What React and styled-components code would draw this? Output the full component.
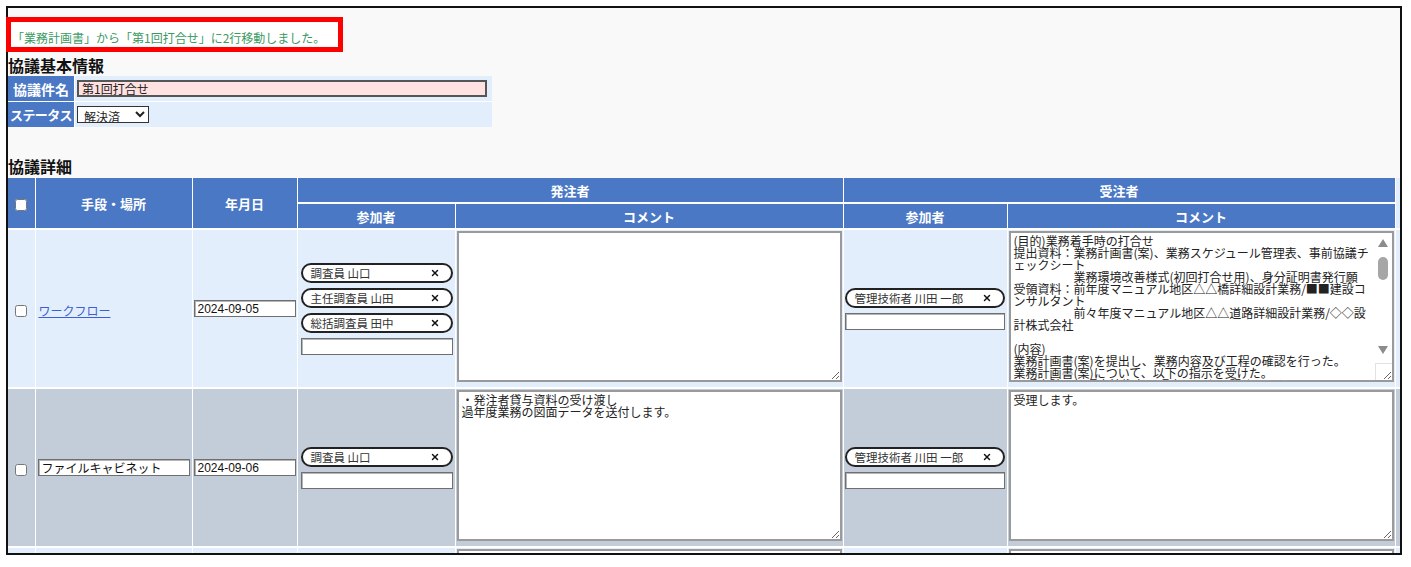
import React from "react";
import styled, { createGlobalStyle } from "styled-components";
import { X } from "lucide-react";

const jp = `"Noto Sans CJK JP", "Liberation Sans", sans-serif`;

const GlobalStyle = createGlobalStyle`
  html, body {
    margin: 0;
    padding: 0;
    background: #fff;
  }
  body {
    font-family: ${jp};
  }
`;

const Page = styled.div`
  position: relative;
  width: 1411px;
  height: 567px;
  padding-top: 6px;
  padding-left: 6px;
  box-sizing: border-box;
`;

const Frame = styled.div`
  width: 1396px;
  height: 549px;
  box-sizing: border-box;
  border: 2px solid #111;
  background: #f9f9f9;
  overflow: hidden;
`;

const RedMark = styled.div`
  position: absolute;
  left: 6px;
  top: 17px;
  width: 337px;
  height: 35px;
  box-sizing: border-box;
  border: 5px solid #ff0000;
  pointer-events: none;
`;

const Message = styled.div`
  width: 327px;
  height: 23px;
  margin: 15px 0 0 3px;
  padding: 8px 0 0 1px;
  box-sizing: border-box;
  background: #fff;
  color: #3a9a62;
  font-size: 12px;
  line-height: 14px;
  white-space: nowrap;
`;

const Heading = styled.h2`
  margin: ${(p) => p.$top}px 0 0;
  font-size: 16px;
  font-weight: bold;
  line-height: ${(p) => p.$lh}px;
  color: #111;
`;

const InfoTable = styled.table`
  width: 484px;
  border-collapse: collapse;
  border-style: hidden;
  table-layout: fixed;
`;

const InfoLabel = styled.th`
  width: 66px;
  height: 25px;
  padding: 0;
  border: 1px solid #fff;
  background: #4a78c5;
  color: #fff;
  font-size: ${(p) => (p.$tight ? 13 : 14)}px;
  letter-spacing: ${(p) => (p.$tight ? "-0.6px" : "0")};
  font-weight: bold;
  text-align: center;
  white-space: nowrap;
  overflow: hidden;
`;

const InfoValue = styled.td`
  padding: 0 0 0 2px;
  border: 1px solid #fff;
  background: #e3eefc;
`;

const TitleInput = styled.input`
  display: block;
  width: 410px;
  height: 17px;
  box-sizing: border-box;
  margin: 0;
  padding: 0 3px;
  border: 2px solid #555;
  background: #ffe1e1;
  font-family: ${jp};
  font-size: 12px;
  color: #222;
`;

const StatusSelect = styled.select`
  display: block;
  width: 72px;
  height: 17px;
  box-sizing: border-box;
  margin: 0;
  padding: 0 2px;
  border: 1px solid #333;
  background: #fff;
  font-family: ${jp};
  font-size: 12px;
  color: #222;
`;

const Grid = styled.table`
  width: 1392px;
  border-collapse: collapse;
  border-style: hidden;
  table-layout: fixed;
  font-family: ${jp};
`;

const HeadCell = styled.th`
  height: 24px;
  padding: 0;
  border: 1px solid #fff;
  border-width: 2px 1px;
  background: ${(p) => (p.$blank ? "#e3eefc" : "#4a78c5")};
  color: #fff;
  font-size: 13px;
  font-weight: bold;
  text-align: center;
  white-space: nowrap;
`;

const Cell = styled.td`
  padding: ${(p) => p.$pad || "0 2px"};
  border: 1px solid #fff;
  border-width: 2px 1px;
  background: ${(p) => (p.$alt ? "#c3cdd9" : "#e3eefc")};
  vertical-align: middle;
  text-align: ${(p) => (p.$center ? "center" : "left")};
`;

const Check = styled.input.attrs({ type: "checkbox" })`
  width: 12px;
  height: 12px;
  margin: 0;
  vertical-align: middle;
`;

const FlowLink = styled.a`
  margin-left: 1px;
  color: #3c5fd6;
  font-size: 12px;
  text-decoration: underline;
`;

const TextBox = styled.input`
  display: block;
  width: ${(p) => p.$w};
  height: 17px;
  box-sizing: border-box;
  margin: 0;
  padding: 0 3px;
  border: 1px solid #6f6f6f;
  box-shadow: inset 1px 1px 0 #b5b5b5;
  background: #fff;
  font-family: ${(p) => (p.$latin ? `"Liberation Sans", sans-serif` : jp)};
  font-size: 12px;
  color: #111;
`;

const Stack = styled.div`
  display: flex;
  flex-direction: column;
  gap: 5px;
`;

const Chip = styled.div`
  display: flex;
  align-items: center;
  justify-content: space-between;
  height: 20px;
  box-sizing: border-box;
  padding: 0 11px 0 8px;
  border: 2px solid #222;
  border-radius: 10px;
  background: #fff;
  font-size: 11.5px;
  color: #333;
  white-space: nowrap;
  svg {
    flex: none;
    margin-left: 4px;
  }
`;

const MemoWrap = styled.div`
  position: relative;
`;

const Memo = styled.textarea`
  display: block;
  width: 100%;
  height: 151px;
  box-sizing: border-box;
  margin: 0;
  padding: 2px ${(p) => (p.$scroll ? 18 : 3)}px 2px 3px;
  border: 2px solid #9a9a9a;
  background: #fff;
  font-family: ${jp};
  font-size: 12px;
  line-height: 12px;
  color: #222;
  white-space: pre;
  overflow: hidden;
`;

/* drawn scrollbar that sits over the right edge of a long memo */
const Rail = styled.div`
  position: absolute;
  top: 2px;
  right: 2px;
  bottom: 19px;
  width: 17px;
  display: flex;
  flex-direction: column;
  align-items: center;
  padding: 6px 0 9px;
  box-sizing: border-box;
  background: #fff;
  pointer-events: none;
`;

const Arrow = styled.div`
  width: 0;
  height: 0;
  border-left: 5px solid transparent;
  border-right: 5px solid transparent;
  ${(p) => (p.$down ? "border-top" : "border-bottom")}: 8px solid #8c8c8c;
  margin-top: ${(p) => (p.$down ? "auto" : "0")};
`;

const Thumb = styled.div`
  width: 10px;
  height: 23px;
  margin-top: 10px;
  border-radius: 5px;
  background: #a6a6a6;
`;

const Corner = styled.div`
  position: absolute;
  right: 2px;
  bottom: 2px;
  width: 17px;
  height: 17px;
  box-sizing: border-box;
  border-top: 1px solid #e2e2e2;
  border-left: 1px solid #e2e2e2;
  pointer-events: none;
`;

const longNote = [
  "(目的)業務着手時の打合せ",
  "提出資料：業務計画書(案)、業務スケジュール管理表、事前協議チ",
  "ェックシート",
  "　　　　　業務環境改善様式(初回打合せ用)、身分証明書発行願",
  "受領資料：前年度マニュアル地区△△橋詳細設計業務/■■建設コ",
  "ンサルタント",
  "　　　　　前々年度マニュアル地区△△道路詳細設計業務/◇◇設",
  "計株式会社",
  "",
  "(内容)",
  "業務計画書(案)を提出し、業務内容及び工程の確認を行った。",
  "業務計画書(案)について、以下の指示を受けた。",
  "・照査計画に照査技術者の照査項目を明記すること。",
  "・工程表に関係機関協議の予定時期を記載すること。",
  "・打合せ予定日を業務スケジュール管理表に反映すること。",
  "",
  "(決定事項)",
  "・業務計画書は指摘事項を修正の上、9月12日までに再提出する。",
  "・次回打合せは中間打合せ(第2回)として10月上旬に実施する。",
  "・貸与資料は9月6日にファイルキャビネットで受け渡す。",
].join("\n");

const cols = [27, 157, 105, 158, 388, 164, 388, 5];

const rows = [
  {
    alt: false,
    place: { link: "ワークフロー" },
    date: "2024-09-05",
    ordering: ["調査員 山口", "主任調査員 山田", "総括調査員 田中"],
    orderNote: "",
    contractor: ["管理技術者 川田 一郎"],
    contractNote: longNote,
    scroll: true,
  },
  {
    alt: true,
    place: { input: "ファイルキャビネット" },
    date: "2024-09-06",
    ordering: ["調査員 山口"],
    orderNote: "・発注者貸与資料の受け渡し\n過年度業務の図面データを送付します。",
    contractor: ["管理技術者 川田 一郎"],
    contractNote: "受理します。",
  },
  {
    alt: false,
    place: { input: "メール" },
    date: "2024-09-10",
    ordering: ["調査員 山口"],
    orderNote: "・測量成果資料の追加提供",
    contractor: ["管理技術者 川田 一郎"],
    contractNote: "受理しました。",
  },
];

function Participants({ names }) {
  return (
    <Stack>
      {names.map((n) => (
        <Chip key={n}>
          <span>{n}</span>
          <X size={10} strokeWidth={3.6} color="#111" />
        </Chip>
      ))}
      <TextBox $w="100%" defaultValue="" />
    </Stack>
  );
}

function Comment({ text, scroll }) {
  return (
    <MemoWrap>
      <Memo $scroll={scroll} defaultValue={text} />
      {scroll && (
        <>
          <Rail>
            <Arrow />
            <Thumb />
            <Arrow $down />
          </Rail>
          <Corner />
        </>
      )}
    </MemoWrap>
  );
}

function DetailRow({ row }) {
  return (
    <tr>
      <Cell $alt={row.alt} $center>
        <Check />
      </Cell>
      <Cell $alt={row.alt}>
        {row.place.link ? (
          <FlowLink href="#">{row.place.link}</FlowLink>
        ) : (
          <TextBox $w="152px" defaultValue={row.place.input} />
        )}
      </Cell>
      <Cell $alt={row.alt} $pad="0 0 0 1px">
        <TextBox $w="102px" $latin defaultValue={row.date} />
      </Cell>
      <Cell $alt={row.alt} $pad="0 2px 0 3px">
        <Participants names={row.ordering} />
      </Cell>
      <Cell $alt={row.alt} $pad="1px 1px 5px 1px">
        <Comment text={row.orderNote} />
      </Cell>
      <Cell $alt={row.alt} $pad="0 2px 0 1px">
        <Participants names={row.contractor} />
      </Cell>
      <Cell $alt={row.alt} $pad="1px 1px 5px 1px">
        <Comment text={row.contractNote} scroll={row.scroll} />
      </Cell>
      <Cell $alt={row.alt} $pad="0" />
    </tr>
  );
}

export default function App() {
  return (
    <Page>
      <GlobalStyle />
      <Frame>
        <Message>「業務計画書」から「第1回打合せ」に2行移動しました。</Message>
        <Heading $top={8} $lh={22}>
          協議基本情報
        </Heading>
        <InfoTable>
          <tbody>
            <tr>
              <InfoLabel>協議件名</InfoLabel>
              <InfoValue>
                <TitleInput defaultValue="第1回打合せ" />
              </InfoValue>
            </tr>
            <tr>
              <InfoLabel $tight>ステータス</InfoLabel>
              <InfoValue>
                <StatusSelect defaultValue="解決済">
                  <option>未解決</option>
                  <option>解決済</option>
                </StatusSelect>
              </InfoValue>
            </tr>
          </tbody>
        </InfoTable>
        <Heading $top={28} $lh={23}>
          協議詳細
        </Heading>
        <Grid>
          <colgroup>
            {cols.map((w, i) => (
              <col key={i} style={{ width: w }} />
            ))}
          </colgroup>
          <thead>
            <tr>
              <HeadCell rowSpan={2}>
                <Check />
              </HeadCell>
              <HeadCell rowSpan={2}>手段・場所</HeadCell>
              <HeadCell rowSpan={2}>年月日</HeadCell>
              <HeadCell colSpan={2}>発注者</HeadCell>
              <HeadCell colSpan={2}>受注者</HeadCell>
              <HeadCell rowSpan={2} $blank />
            </tr>
            <tr>
              <HeadCell>参加者</HeadCell>
              <HeadCell>コメント</HeadCell>
              <HeadCell>参加者</HeadCell>
              <HeadCell>コメント</HeadCell>
            </tr>
          </thead>
          <tbody>
            {rows.map((r, i) => (
              <DetailRow key={i} row={r} />
            ))}
          </tbody>
        </Grid>
      </Frame>
      <RedMark />
    </Page>
  );
}
